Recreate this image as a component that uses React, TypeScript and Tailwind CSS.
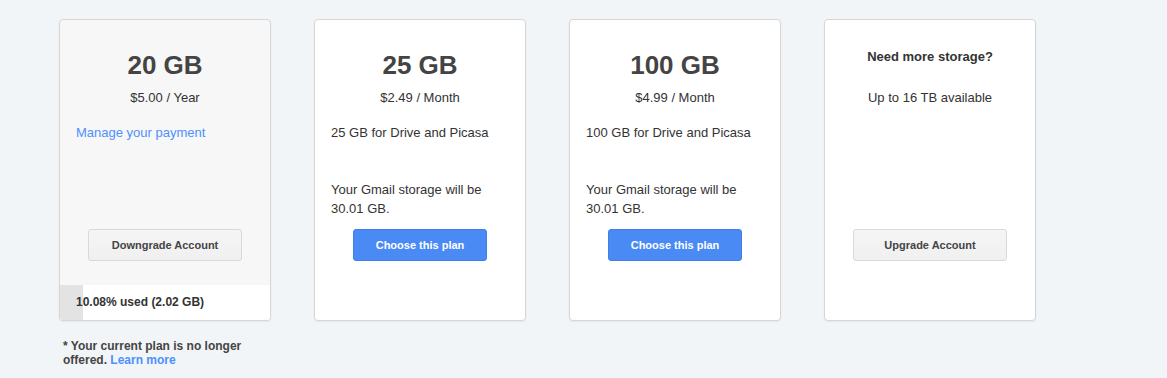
import React from "react";

const font = { fontFamily: '"Liberation Sans", Arial, sans-serif' };

function GrayButton({ label }: { label: string }) {
  return (
    <div className="flex justify-center">
      <button className="w-[154px] h-[32px] rounded-[3px] border border-[#d9d9d9] bg-gradient-to-b from-[#f5f5f5] to-[#f0f0f0] text-[11px] font-bold text-[#444]">
        {label}
      </button>
    </div>
  );
}

function BlueButton({ label }: { label: string }) {
  return (
    <div className="flex justify-center">
      <button className="w-[134px] h-[32px] rounded-[3px] border border-[#3f7fe6] bg-[#4a8af4] text-[11px] font-bold text-white">
        {label}
      </button>
    </div>
  );
}

function Card({ children, className = "" }: { children: React.ReactNode; className?: string }) {
  return (
    <div
      className={`w-[212px] h-[302px] rounded-[4px] border border-[#d6d6d6] shadow-[0_1px_2px_rgba(0,0,0,0.06)] flex flex-col overflow-hidden ${className}`}
    >
      {children}
    </div>
  );
}

function PlanHeader({ size, price }: { size: string; price: string }) {
  return (
    <>
      <div className="pt-[29px] text-center text-[26px] leading-[32px] font-bold text-[#444]">{size}</div>
      <div className="mt-[7px] text-center text-[13px] leading-[19px] text-[#333]">{price}</div>
    </>
  );
}

export default function App() {
  return (
    <div className="min-h-[378px] bg-[#f2f5f8] pl-[59px] pt-[19px] text-[#333]" style={font}>
      <div className="flex gap-[43px]">
        <Card className="bg-[#f7f7f7]">
          <div className="h-[209px]">
            <PlanHeader size="20 GB" price="$5.00 / Year" />
            <div className="mt-[16px] px-[16px] text-[13px] leading-[19px] text-[#4d90fe]">Manage your payment</div>
          </div>
          <GrayButton label="Downgrade Account" />
          <div className="mt-[24px] flex-1 bg-white relative flex items-center">
            <div className="absolute left-0 top-0 bottom-0 bg-[#e3e3e3]" style={{ width: "11%" }} />
            <div className="relative pl-[16px] pb-[2px] text-[12px] font-bold text-[#333]">10.08% used (2.02 GB)</div>
          </div>
        </Card>

        <Card className="bg-white">
          <div className="h-[209px]">
            <PlanHeader size="25 GB" price="$2.49 / Month" />
            <div className="mt-[16px] px-[16px] text-[13px] leading-[19px]">25 GB for Drive and Picasa</div>
            <div className="mt-[38px] px-[16px] text-[13px] leading-[19px]">
              Your Gmail storage will be
              <br />
              30.01 GB.
            </div>
          </div>
          <BlueButton label="Choose this plan" />
        </Card>

        <Card className="bg-white">
          <div className="h-[209px]">
            <PlanHeader size="100 GB" price="$4.99 / Month" />
            <div className="mt-[16px] px-[16px] text-[13px] leading-[19px]">100 GB for Drive and Picasa</div>
            <div className="mt-[38px] px-[16px] text-[13px] leading-[19px]">
              Your Gmail storage will be
              <br />
              30.01 GB.
            </div>
          </div>
          <BlueButton label="Choose this plan" />
        </Card>

        <Card className="bg-white">
          <div className="h-[209px]">
            <div className="pt-[27px] text-center text-[13px] leading-[19px] font-bold text-[#333]">Need more storage?</div>
            <div className="mt-[22px] text-center text-[13px] leading-[19px] text-[#333]">Up to 16 TB available</div>
          </div>
          <GrayButton label="Upgrade Account" />
        </Card>
      </div>

      <div className="mt-[18px] ml-[4px] w-[200px] text-[12px] leading-[14px] font-bold text-[#444]">
        * Your current plan is no longer offered. <span className="text-[#4d90fe]">Learn more</span>
      </div>
    </div>
  );
}
